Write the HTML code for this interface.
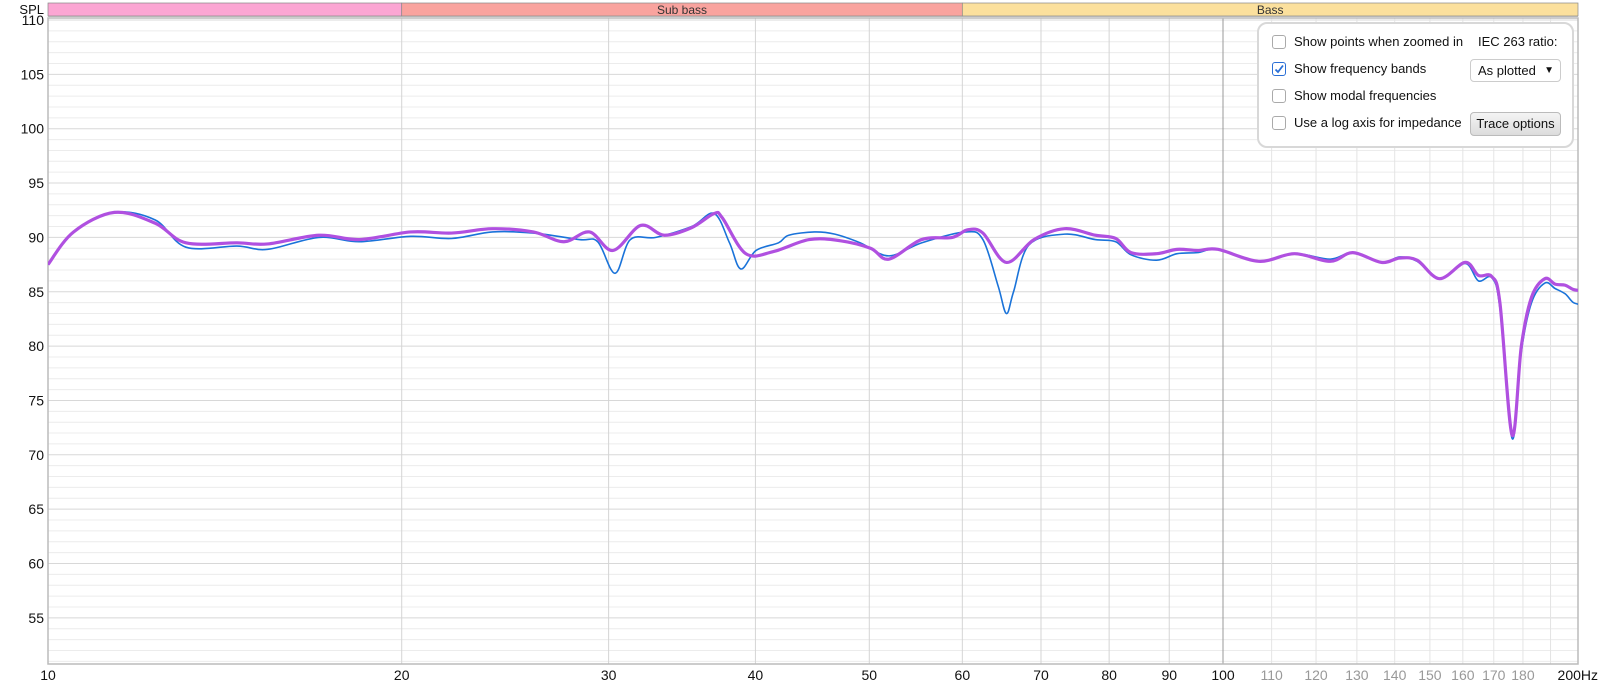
<!DOCTYPE html>
<html><head><meta charset="utf-8"><style>
body{margin:0;width:1600px;height:690px;overflow:hidden;background:#fff;font-family:"Liberation Sans",sans-serif;}
svg{position:absolute;left:0;top:0}
.panel{position:absolute;left:1257px;top:22px;width:313px;height:122px;border:2px solid #d8d8d8;border-radius:10px;background:#fff;font-size:13px;color:#111}
.row{position:absolute;left:13px;height:20px;line-height:20px}
.cb{display:inline-block;width:12px;height:12px;border:1px solid #aaa;border-radius:3px;vertical-align:-3px;margin-right:8px;background:#fff;position:relative}
.cb.on{border-color:#2a6fd6}
.btn{position:absolute;left:211px;width:89px;border:1px solid #bbb;border-radius:4px;text-align:center;font-size:13px}
</style></head><body>
<svg id="s" width="1600" height="690" xmlns="http://www.w3.org/2000/svg" font-family="Liberation Sans, sans-serif"></svg>
<div class="panel">
 <div class="row" style="top:8px"><span class="cb"></span>Show points when zoomed in</div>
 <div style="position:absolute;left:219px;top:8px;line-height:20px">IEC 263 ratio:</div>
 <div class="row" style="top:35px"><span class="cb on"><svg width="12" height="12" style="position:absolute;left:0;top:0"><path d="M2.5 6.5 L5 9 L10 2.5" stroke="#2a6fd6" stroke-width="1.8" fill="none"/></svg></span>Show frequency bands</div>
 <div class="btn" style="top:35px;height:21px;line-height:21px;background:#fff;border-color:#ccc;text-align:left;padding-left:7px;width:82px">As plotted <span style="position:absolute;right:6px;font-size:10px">&#9660;</span></div>
 <div class="row" style="top:62px"><span class="cb"></span>Show modal frequencies</div>
 <div class="row" style="top:89px"><span class="cb"></span>Use a log axis for impedance</div>
 <div class="btn" style="top:88px;height:22px;line-height:22px;background:linear-gradient(#f4f4f4,#dcdcdc)">Trace options</div>
</div>
<script>
const NS="http://www.w3.org/2000/svg",s=document.getElementById('s');
const X=f=>48+1175*Math.log10(f/10), Y=d=>20+(110-d)*10.87;
function el(t,a,txt){const e=document.createElementNS(NS,t);for(const k in a)e.setAttribute(k,a[k]);if(txt)e.textContent=txt;s.appendChild(e);return e;}
const L=48,R=1578,T=18,B=664;
for(let d=51;d<=110;d++){const y=Y(d);el('line',{x1:L,x2:R,y1:y,y2:y,stroke:d%5?'#ececec':'#d8d8d8','stroke-width':1});}
for(let f=20;f<200;f+=10)el('line',{x1:X(f),x2:X(f),y1:T,y2:B,stroke:f==100?'#999':(f>100?'#e4e4e4':'#d4d4d4')});
el('rect',{x:L,y:T,width:R-L,height:B-T,fill:'none',stroke:'#bbb','stroke-width':1.5});
el('line',{x1:L,x2:R,y1:17,y2:17,stroke:'#ccc','stroke-width':2});
el('rect',{x:L,y:3,width:X(20)-L,height:13,fill:'#fba6d3',stroke:'#888','stroke-width':0.7});
el('rect',{x:X(20),y:3,width:X(60)-X(20),height:13,fill:'#f9a39e',stroke:'#888','stroke-width':0.7});
el('rect',{x:X(60),y:3,width:R-X(60),height:13,fill:'#fbe09d',stroke:'#888','stroke-width':0.7});
el('text',{x:(X(20)+X(60))/2,y:14,'font-size':12,'text-anchor':'middle',fill:'#333'},'Sub bass');
el('text',{x:(X(60)+R)/2,y:14,'font-size':12,'text-anchor':'middle',fill:'#333'},'Bass');
el('text',{x:44,y:14,'font-size':13,'text-anchor':'end',fill:'#111'},'SPL');
for(let d=55;d<=110;d+=5)el('text',{x:44,y:Y(d)+5,'font-size':14,'text-anchor':'end',fill:'#111'},String(d));
[10,20,30,40,50,60,70,80,90,100].forEach(f=>el('text',{x:X(f),y:680,'font-size':14,'text-anchor':'middle',fill:'#111'},String(f)));
[110,120,130,140,150,160,170,180].forEach(f=>el('text',{x:X(f),y:680,'font-size':14,'text-anchor':'middle',fill:'#999'},String(f)));
el('text',{x:1598,y:680,'font-size':14,'text-anchor':'end',fill:'#111'},'200Hz');
const pf=x=>Math.pow(10,(x-45)/1150+1);
const P=[45,87.5,70,90.5,110,92.3,150,91.3,180,89.5,230,89.5,260,89.4,310,90.2,350,89.8,400,90.5,440,90.4,480,90.8,520,90.5,550,89.6,575,90.5,598,88.8,625,91.1,648,90.2,675,90.9,697,92.2,705,91.8,728,88.5,755,88.7,790,89.8,820,89.7,850,89,868,88,900,89.8,930,90,945,90.7,960,90.4,983,87.7,1010,89.8,1040,90.8,1070,90.2,1090,89.9,1105,88.6,1130,88.5,1150,88.9,1170,88.8,1190,88.9,1230,87.8,1265,88.5,1300,87.8,1322,88.6,1350,87.7,1368,88.1,1385,87.9,1407,86.2,1432,87.7,1445,86.5,1458,86.4,1466,84,1478,71.8,1487,80,1497,84.5,1510,86.2,1520,85.7,1530,85.6,1538,85.2,1547,85.1];
const Bl=[45,87.5,70,90.5,110,92.3,150,91.6,180,89.1,230,89.2,260,88.9,310,90,350,89.6,400,90.1,440,89.9,480,90.5,520,90.4,565,89.8,583,89.6,600,86.7,615,89.8,640,90,675,91,697,92.2,712,89.5,723,87.1,738,88.8,760,89.5,770,90.2,795,90.5,815,90.3,840,89.5,868,88.3,900,89.5,943,90.5,960,89.8,975,85.5,983,83,990,85,1005,89.3,1040,90.3,1070,89.8,1090,89.6,1105,88.4,1130,87.9,1150,88.5,1170,88.6,1190,88.9,1230,87.8,1265,88.5,1300,88,1322,88.6,1350,87.7,1368,88.2,1385,87.8,1407,86.2,1432,87.6,1445,86,1458,86.3,1466,83.5,1478,71.5,1487,79.5,1497,84,1510,85.8,1520,85.3,1530,84.8,1538,84,1547,83.8];
function path(a){const p=[];for(let i=0;i<a.length;i+=2)p.push([X(pf(a[i])),Y(a[i+1])]);let d='M'+p[0][0]+' '+p[0][1];
for(let i=0;i<p.length-1;i++){const p0=p[i-1]||p[i],p1=p[i],p2=p[i+1],p3=p[i+2]||p2;
d+=` C${p1[0]+(p2[0]-p0[0])/6} ${p1[1]+(p2[1]-p0[1])/6} ${p2[0]-(p3[0]-p1[0])/6} ${p2[1]-(p3[1]-p1[1])/6} ${p2[0]} ${p2[1]}`;}return d;}
const cp=el('clipPath',{id:'c'});const r=document.createElementNS(NS,'rect');r.setAttribute('x',L);r.setAttribute('y',T);r.setAttribute('width',R-L);r.setAttribute('height',B-T);cp.appendChild(r);
el('path',{d:path(Bl),fill:'none',stroke:'#1a73d9','stroke-width':1.6,'clip-path':'url(#c)'});
el('path',{d:path(P),fill:'none',stroke:'#b050e0','stroke-width':3.2,'clip-path':'url(#c)'});
</script>
</body></html>
